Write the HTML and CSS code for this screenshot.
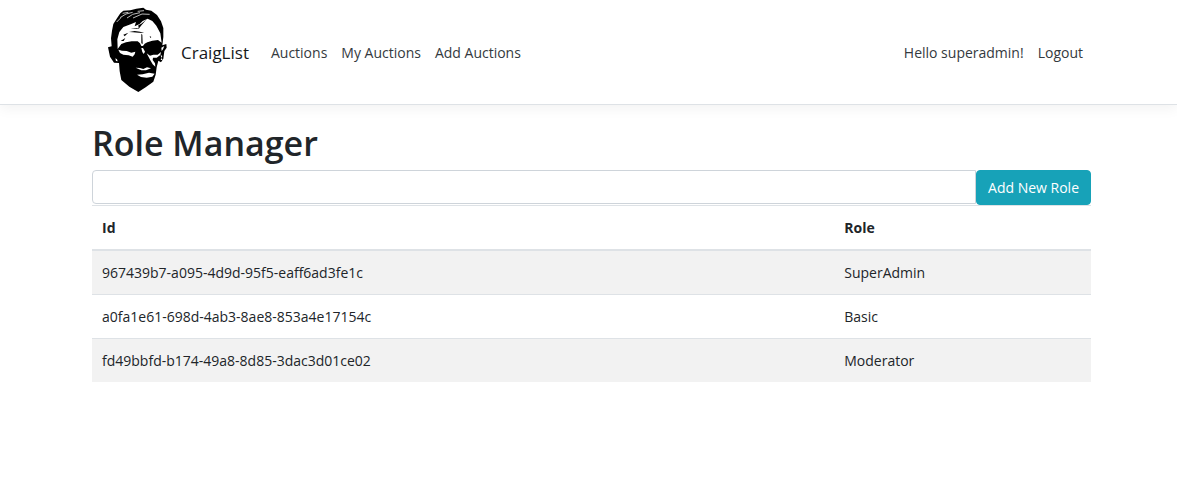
FILE: index.html
```html
<!DOCTYPE html>
<html lang="en">
<head>
<meta charset="utf-8">
<title>Role Manager - CraigList</title>
<link rel="stylesheet" href="styles.css">
</head>
<body>
<header class="site-header">
  <nav class="container navbar" aria-label="Main">
    <a class="brand" href="#">
      <svg class="logo" viewBox="21 21 180 258" aria-hidden="true">
        <path d="M24 142L35 139 33 115 36 92 40 72 51 55 61 40 70 32 91 31 109 26 130 23 138 29 154 32 171 45 183 64 190 84 190 111 187 136 199 132 200 143 193 153 190 176 183 187 175 182 170 202 167 224 160 245 137 262 115 276 88 260 64 240 59 214 57 189 42 188 30 170Z"/>
        <g fill="#fff">
          <path d="M53 147L52 118 58 96 70 81 92 73 108 66 104 79 119 72 128 63 143 56 157 63 169 77 181 100 185 128 174 120 157 122 142 127 134 131 129 138 124 138 120 130 113 124 95 124 78 127 64 132Z"/>
          <path d="M55 149L66 152 80 153 94 158 106 155 104 163 98 170 86 166 70 164 60 159Z"/>
          <path d="M140 160L150 167 160 164 173 164 183 156 181 165 170 173 159 173 158 180 165 190 166 200 158 193 151 181Z"/>
          <path d="M124 144L129 144 135 155 131 162 127 156Z"/>
          <path d="M107 203L120 204 130 207 141 202 153 205 138 211 124 211Z"/>
          <path d="M111 224L128 223 147 218 164 221 157 230 140 233 123 231Z"/>
          <path d="M184 143L193 138 189 148 185 153ZM46 175L51 178 53 184 48 183ZM182 165L187 168 184 174 188 180 182 180 184 174Z"/>
        </g>
        <path d="M87 96L104 93 120 95 133 99 117 98 99 97ZM91 87L109 84 120 87 108 86ZM70 104L85 98 74 109ZM124 101L127 104 128 132 124 130ZM149 108L154 111 151 114ZM62 123L76 114 71 123ZM124 71L135 62 140 58 125 75 116 86 115 76Z"/>
        <path d="M60 53L78 42 98 37M81 54L98 43 120 38M99 54L126 42 149 43M68 40L85 37M113 34L132 32M50 66L63 53" fill="none" stroke="#bbb" stroke-width="3"/>
      </svg>
      <span>CraigList</span>
    </a>
    <ul class="nav-list nav-main">
      <li><a href="#">Auctions</a></li>
      <li><a href="#">My Auctions</a></li>
      <li><a href="#">Add Auctions</a></li>
    </ul>
    <ul class="nav-list nav-user">
      <li><a href="#">Hello superadmin!</a></li>
      <li><button type="button" class="logout">Logout</button></li>
    </ul>
  </nav>
</header>
<main class="container">
  <h1>Role Manager</h1>
  <form class="role-form">
    <input class="role-input" type="text" aria-label="Role name">
    <button class="add-button" type="button">Add New Role</button>
  </form>
  <table class="roles">
    <thead>
      <tr><th class="id-column" scope="col">Id</th><th scope="col">Role</th></tr>
    </thead>
    <tbody>
      <tr><td>967439b7-a095-4d9d-95f5-eaff6ad3fe1c</td><td>SuperAdmin</td></tr>
      <tr><td>a0fa1e61-698d-4ab3-8ae8-853a4e17154c</td><td>Basic</td></tr>
      <tr><td>fd49bbfd-b174-49a8-8d85-3dac3d01ce02</td><td>Moderator</td></tr>
    </tbody>
  </table>
</main>
</body>
</html>
```
FILE: styles.css
```css
*, *::before, *::after { box-sizing: border-box; }
body {
  margin: 0;
  background: #fff;
  color: #212529;
  font-family: "Open Sans", "Noto Sans", sans-serif;
  font-size: 14px;
  line-height: 21px;
}
a { color: inherit; text-decoration: none; }
button, input { font: inherit; }
.container { padding: 0 86px 0 92px; }
.site-header {
  margin-bottom: 17px;
  border-bottom: 1px solid #dee2e6;
  box-shadow: 0 4px 12px rgba(0, 0, 0, .05);
}
.navbar { display: flex; align-items: center; min-height: 104px; }
.brand {
  display: flex;
  align-items: center;
  gap: 14px;
  margin-left: 15px;
  font-size: 17px;
  line-height: 27px;
  color: #16181b;
}
.logo { width: 60px; height: 86px; margin-bottom: 4px; }
.nav-list {
  display: flex;
  gap: 14px;
  margin: 0;
  padding: 0;
  list-style: none;
  color: #343a40;
}
.nav-main { margin-left: 22px; }
.nav-user { margin-left: auto; padding-right: 8px; }
.logout { padding: 0; border: 0; background: none; color: inherit; }
h1 {
  margin: 0 0 6px;
  font-size: 34px;
  font-weight: 600;
  line-height: 42px;
}
.role-form { display: flex; align-items: flex-start; }
.role-input {
  flex: 1;
  min-width: 0;
  height: 34px;
  padding: 6px 12px;
  border: 1px solid #ced4da;
  border-radius: 4px 0 0 4px;
}
.add-button {
  padding: 6px 11px;
  border: 1px solid #17a2b8;
  border-radius: 4px;
  background: #17a2b8;
  color: #fff;
}
.roles { width: 100%; border-collapse: separate; border-spacing: 0; }
.roles th, .roles td {
  padding: 11px 10px;
  border-top: 1px solid #dee2e6;
  text-align: left;
}
.roles thead th { border-bottom: 2px solid #dee2e6; font-weight: 700; }
.roles tbody tr:first-child td { border-top: 0; }
.roles tbody tr:nth-child(odd) { background: #f2f2f2; }
.id-column { width: 74.3%; }
```
